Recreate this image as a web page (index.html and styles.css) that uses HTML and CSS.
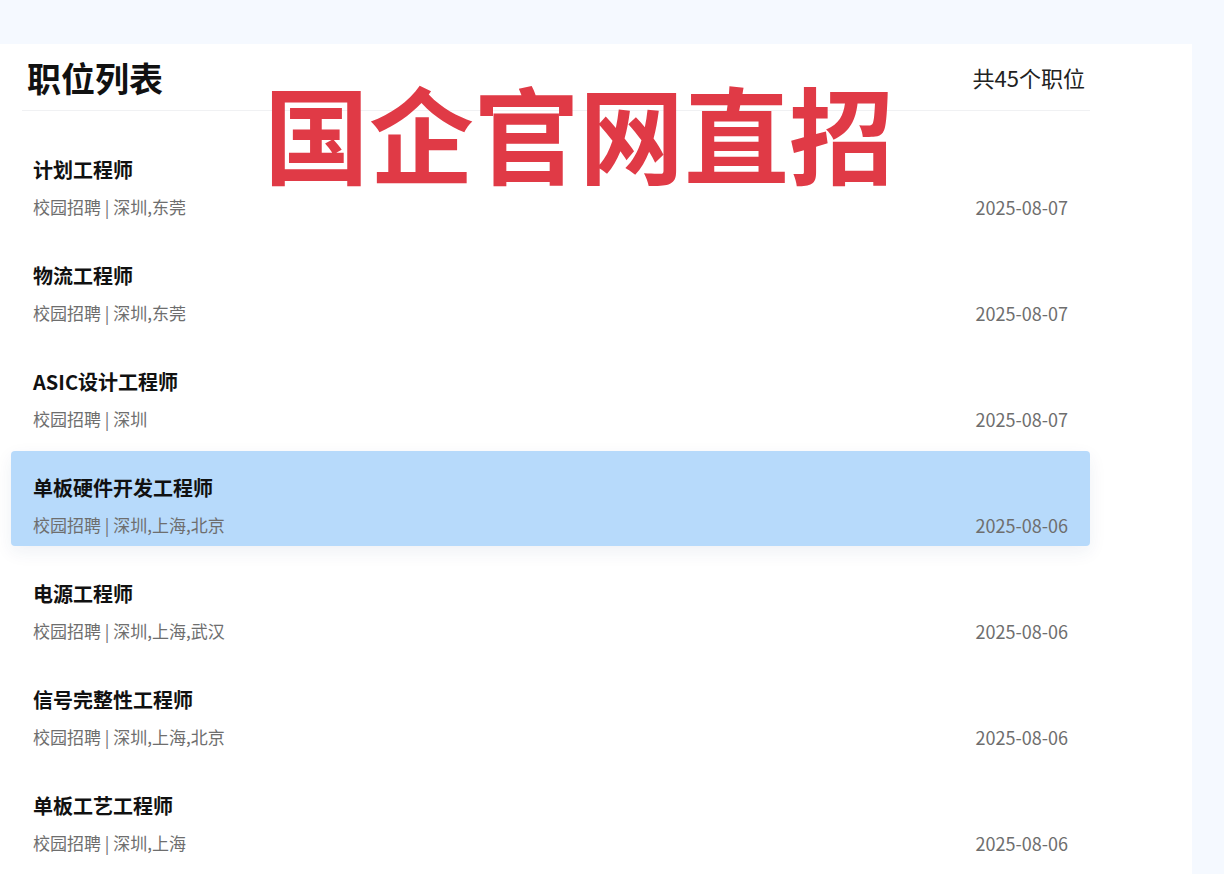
FILE: index.html
```html
<!DOCTYPE html>
<html lang="zh-CN">
<head>
    <meta charset="UTF-8">
    <meta name="viewport" content="width=device-width, initial-scale=1.0">
    <title>职位列表</title>
    <link rel="stylesheet" href="styles.css">
</head>
<body>

    <div class="panel">
        <div class="list-header">
            <h2>职位列表</h2>
            <span class="total">共45个职位</span>
        </div>

        <ul class="job-list">
            <li class="job-item">
                <div class="job-info">
                    <div class="job-title">计划工程师</div>
                    <div class="job-meta">校园招聘 | 深圳,东莞</div>
                </div>
                <div class="job-date">2025-08-07</div>
            </li>
            <li class="job-item">
                <div class="job-info">
                    <div class="job-title">物流工程师</div>
                    <div class="job-meta">校园招聘 | 深圳,东莞</div>
                </div>
                <div class="job-date">2025-08-07</div>
            </li>
            <li class="job-item">
                <div class="job-info">
                    <div class="job-title">ASIC设计工程师</div>
                    <div class="job-meta">校园招聘 | 深圳</div>
                </div>
                <div class="job-date">2025-08-07</div>
            </li>
            <li class="job-item active">
                <div class="job-info">
                    <div class="job-title">单板硬件开发工程师</div>
                    <div class="job-meta">校园招聘 | 深圳,上海,北京</div>
                </div>
                <div class="job-date">2025-08-06</div>
            </li>
            <li class="job-item">
                <div class="job-info">
                    <div class="job-title">电源工程师</div>
                    <div class="job-meta">校园招聘 | 深圳,上海,武汉</div>
                </div>
                <div class="job-date">2025-08-06</div>
            </li>
            <li class="job-item">
                <div class="job-info">
                    <div class="job-title">信号完整性工程师</div>
                    <div class="job-meta">校园招聘 | 深圳,上海,北京</div>
                </div>
                <div class="job-date">2025-08-06</div>
            </li>
            <li class="job-item">
                <div class="job-info">
                    <div class="job-title">单板工艺工程师</div>
                    <div class="job-meta">校园招聘 | 深圳,上海</div>
                </div>
                <div class="job-date">2025-08-06</div>
            </li>
        </ul>

        <!-- 贴在截图上的标语 -->
        <div class="banner">国企官网直招</div>
    </div>

</body>
</html>
```

FILE: styles.css
```css
body {
    font-family: "Noto Sans CJK SC", "Noto Sans", sans-serif;
    background-color: #f5f9ff;
    margin: 0;
    padding: 0;
    height: 874px;
    overflow: hidden;
}
.panel {
    position: relative;
    width: 1079px;
    margin-top: 44px;
    padding: 0 102px 20px 11px;
    background-color: #ffffff;
}
.list-header {
    display: flex;
    justify-content: space-between;
    align-items: center;
    height: 66px;
    margin-left: 11px;
    padding: 0 5px;
    border-bottom: 1px solid #f0f1f3;
}
.list-header h2 {
    margin: 0;
    font-size: 34px;
    font-weight: 700;
    color: #111;
}
.total {
    font-size: 22px;
    color: #222;
}
.job-list {
    list-style-type: none;
    margin: 22px 0 0 0;
    padding: 0;
}
.job-item {
    display: flex;
    justify-content: space-between;
    align-items: flex-end;
    height: 95px;
    box-sizing: border-box;
    padding: 24px 22px 9px 22px;
    margin-bottom: 11px;
    border-radius: 4px;
}
.job-item.active {
    background-color: #b7dafb;
    box-shadow: 0 6px 18px rgba(30, 60, 110, 0.07);
}
.job-title {
    font-size: 20px;
    line-height: 26px;
    font-weight: 700;
    color: #111;
}
.job-meta {
    margin-top: 12px;
    font-size: 17px;
    line-height: 24px;
    color: #6e6e6e;
}
.job-date {
    font-size: 18px;
    line-height: 24px;
    color: #6e6e6e;
}
.banner {
    position: absolute;
    left: 264px;
    top: 34px;
    font-size: 105px;
    line-height: 1;
    font-weight: 700;
    color: #e03a46;
    white-space: nowrap;
}
```
